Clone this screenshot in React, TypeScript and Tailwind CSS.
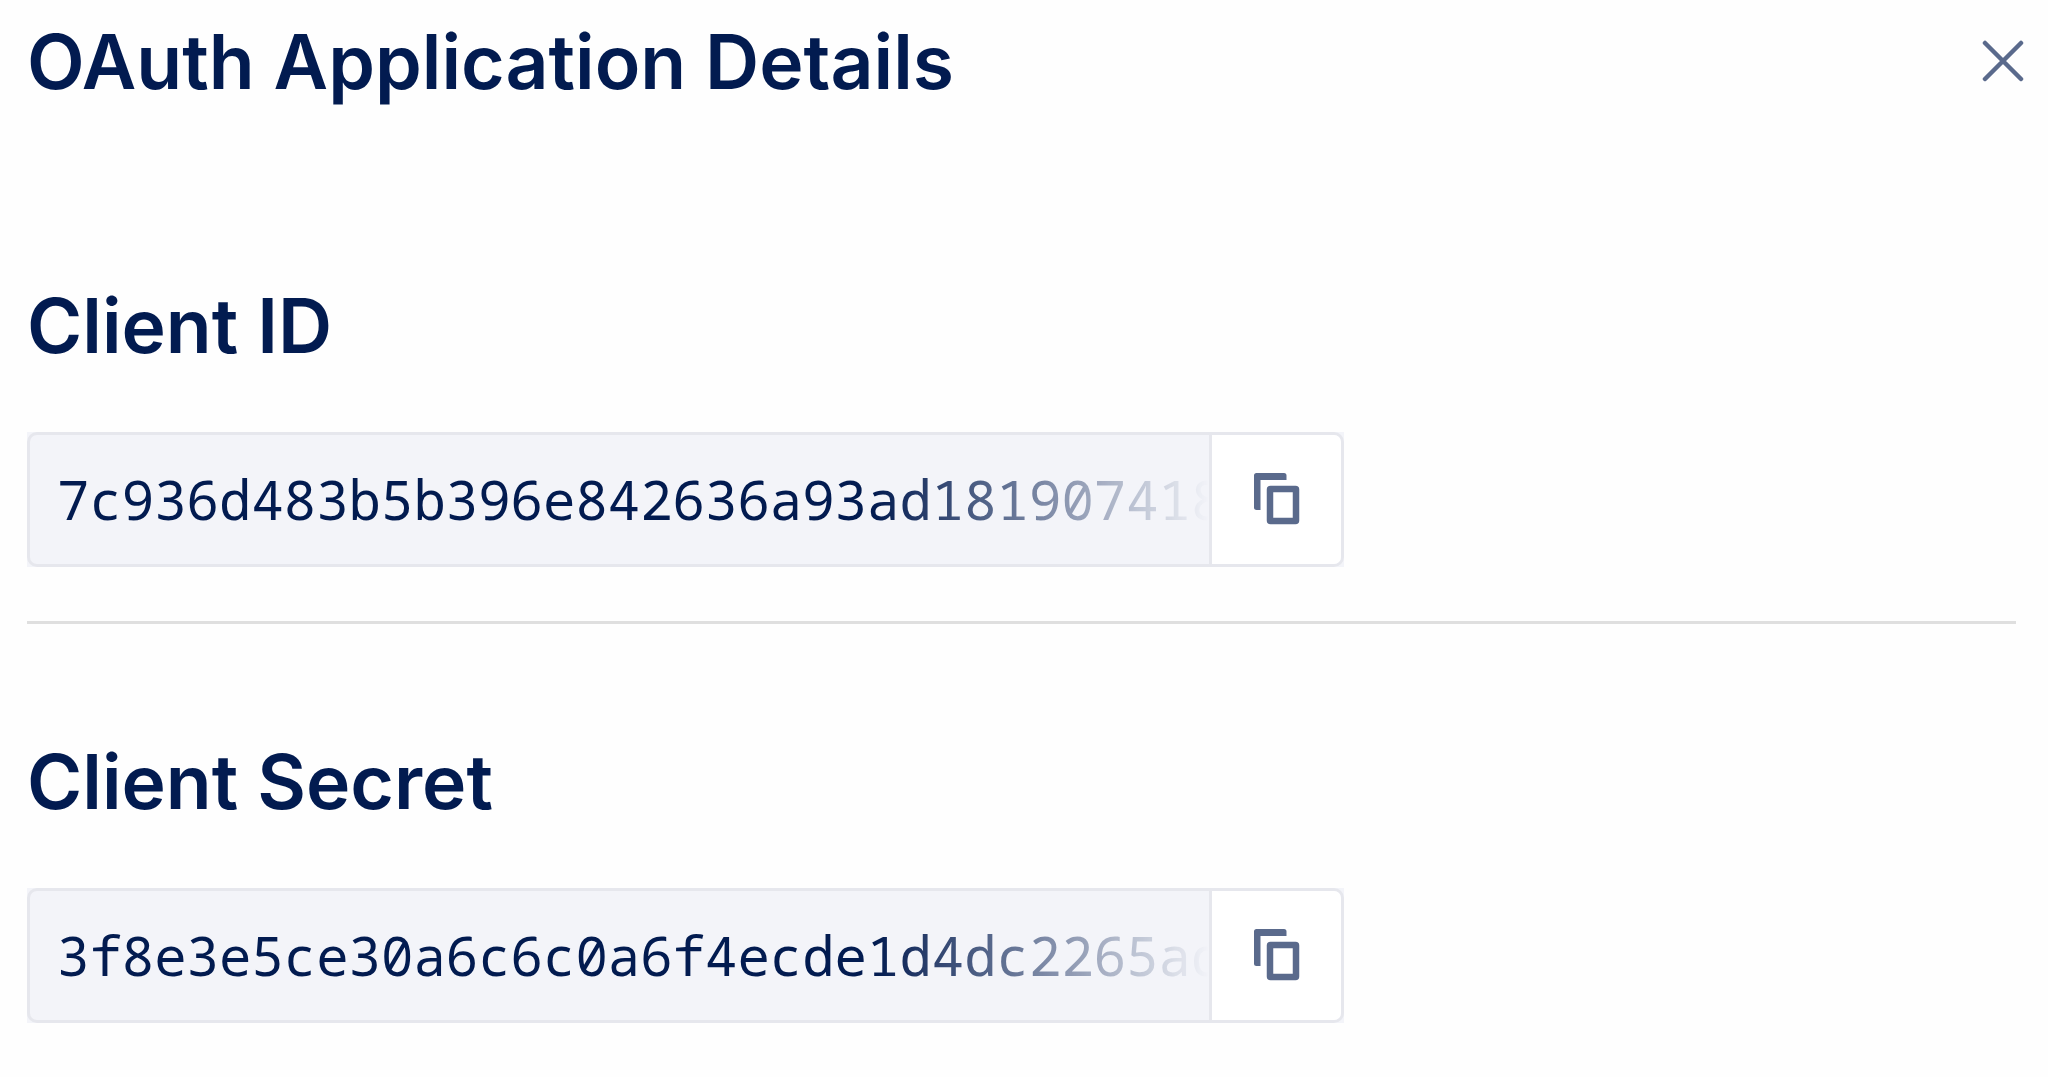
import React from "react";

const headingClass =
  "font-['Inter','Open_Sans',sans-serif] text-[75px] leading-[92px] font-semibold text-[#021b50]";

function CloseIcon() {
  return (
    <svg viewBox="0 0 42 42" className="size-[42px]" fill="none" stroke="#5a6a8c" strokeWidth="4.5" strokeLinecap="round" aria-hidden="true">
      <path d="M3 3 39 39M39 3 3 39" />
    </svg>
  );
}

function CopyIcon() {
  return (
    <svg viewBox="0 0 46 52" className="h-[52px] w-[46px]" fill="none" stroke="#5a6a8c" aria-hidden="true">
      <path d="M0 34.5V2.5A2.5 2.5 0 0 1 2.5 0H30a2.5 2.5 0 0 1 2.5 2.5V7H6.5v30H2.5A2.5 2.5 0 0 1 0 34.5Z" fill="#5a6a8c" stroke="none" />
      <rect x="16" y="16" width="26" height="32" rx="0.5" strokeWidth="6.5" strokeLinejoin="round" />
    </svg>
  );
}

function Credential({ id, label, value }: { id: string; label: string; value: string }) {
  return (
    <section>
      <h2 className={headingClass}>
        <label htmlFor={id}>{label}</label>
      </h2>
      <div className="mt-[60px] max-w-[1317px] bg-[#f3f4f9]">
        <div className="flex h-[135px] overflow-hidden rounded-[10px] border-[3px] border-[#e6e7ed]">
          <input
            id={id}
            type="text"
            readOnly
            value={value}
            className="min-w-0 flex-1 bg-transparent pl-[27px] font-['Noto_Sans_Mono','DejaVu_Sans_Mono',monospace] text-[54px] text-[#021b50] outline-none [mask-image:linear-gradient(to_right,black_calc(100%_-_335px),transparent)]"
          />
          <button
            type="button"
            aria-label={`Copy ${label}`}
            className="flex w-[132px] shrink-0 items-center justify-center border-l-[3px] border-[#e6e7ed] bg-white pb-0.5"
          >
            <CopyIcon />
          </button>
        </div>
      </div>
    </section>
  );
}

export default function App() {
  return (
    <main className="min-h-screen bg-[#fefefe] pt-4 pr-8 pl-[27px]">
      <header className="-mr-2 flex items-start justify-between">
        <h1 className={headingClass}>OAuth Application Details</h1>
        <button type="button" aria-label="Close" className="mt-6">
          <CloseIcon />
        </button>
      </header>
      <div className="mt-[172px]">
        <Credential id="client-id" label="Client ID" value="7c936d483b5b396e842636a93ad181907418" />
        <hr className="mt-[54px] mb-[112px] border-t-[3px] border-[#dfdfdf]" />
        <Credential id="client-secret" label="Client Secret" value="3f8e3e5ce30a6c6c0a6f4ecde1d4dc2265ad" />
      </div>
    </main>
  );
}
